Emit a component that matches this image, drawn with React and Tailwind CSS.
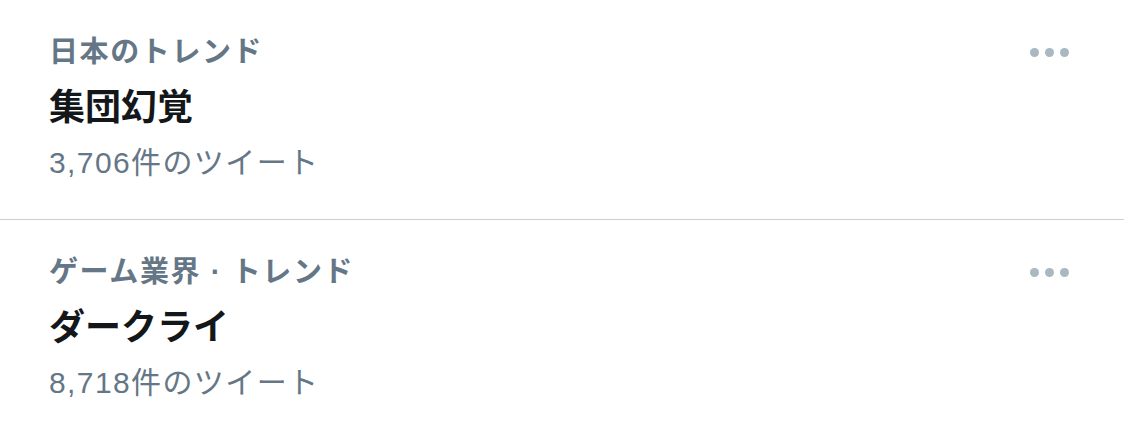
import React from "react";

const items = [
  { label: "日本のトレンド", title: "集団幻覚", count: "3,706件のツイート" },
  { label: "ゲーム業界 · トレンド", title: "ダークライ", count: "8,718件のツイート" },
];

function Dots() {
  return (
    <div className="flex items-center gap-[6px] h-[36px]">
      <span className="block w-[9px] h-[9px] rounded-full bg-[#aab8c2]" />
      <span className="block w-[9px] h-[9px] rounded-full bg-[#aab8c2]" />
      <span className="block w-[9px] h-[9px] rounded-full bg-[#aab8c2]" />
    </div>
  );
}

export default function App() {
  return (
    <div
      className="w-[1124px] h-[438px] bg-white overflow-hidden"
      style={{ fontFamily: '"Liberation Sans", "Noto Sans CJK JP", sans-serif' }}
    >
      {items.map((it, i) => (
        <div
          key={i}
          className={`flex justify-between pl-[49px] pr-[55px] ${i === 0 ? "pt-[34px] pb-[36px] border-b border-[#cfcfcf]" : "pt-[34px]"}`}
        >
          <div className="flex flex-col">
            <div className="text-[29px] leading-[36px] tracking-[1.6px] font-bold text-[#657786]">{it.label}</div>
            <div className="mt-[16px] text-[36px] leading-[44px] font-bold text-[#14171a]">{it.title}</div>
            <div className="mt-[13px] text-[30px] leading-[40px] tracking-[1.4px] text-[#657786]">{it.count}</div>
          </div>
          <Dots />
        </div>
      ))}
    </div>
  );
}
